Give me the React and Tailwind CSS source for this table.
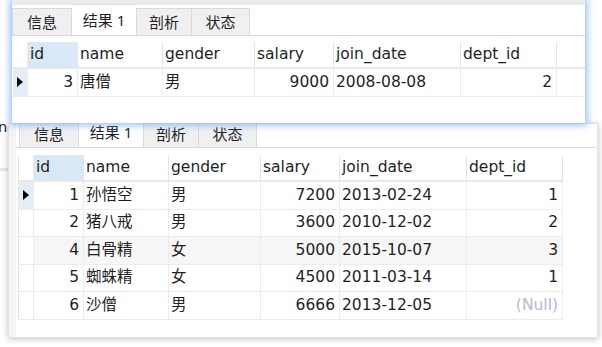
import React from "react";

const columns = [
  { key: "id", w: 50, right: true },
  { key: "name", w: 85 },
  { key: "gender", w: 92 },
  { key: "salary", w: 79, right: true },
  { key: "join_date", w: 127 },
  { key: "dept_id", w: 96, right: true },
];

const topRows = [{ id: 3, name: "唐僧", gender: "男", salary: 9000, join_date: "2008-08-08", dept_id: 2 }];

const bottomRows = [
  { id: 1, name: "孙悟空", gender: "男", salary: 7200, join_date: "2013-02-24", dept_id: 1 },
  { id: 2, name: "猪八戒", gender: "男", salary: 3600, join_date: "2010-12-02", dept_id: 2 },
  { id: 4, name: "白骨精", gender: "女", salary: 5000, join_date: "2015-10-07", dept_id: 3 },
  { id: 5, name: "蜘蛛精", gender: "女", salary: 4500, join_date: "2011-03-14", dept_id: 1 },
  { id: 6, name: "沙僧", gender: "男", salary: 6666, join_date: "2013-12-05", dept_id: null },
];

const font = { fontFamily: '"Noto Sans", "Noto Sans CJK SC", sans-serif' };
const cellFont = { fontFamily: '"DejaVu Sans", "Noto Sans CJK SC", sans-serif' };

const Tabs = () => (
  <div className="flex items-end h-full">
    <div className="h-[27px] w-[60px] flex items-center justify-center bg-[#f0f0f0] border border-b-0 border-[#dadada] text-[15px] text-[#1f1f1f]">
      信息
    </div>
    <div className="h-[31px] w-[64px] flex items-center justify-center bg-white border-t border-[#dadada] text-[15px] text-[#1f1f1f]">
      结果 1
    </div>
    <div className="h-[27px] w-[56px] flex items-center justify-center bg-[#f0f0f0] border border-b-0 border-[#dadada] text-[15px] text-[#1f1f1f]">
      剖析
    </div>
    <div className="h-[27px] w-[58px] flex items-center justify-center bg-[#f0f0f0] border border-b-0 border-l-0 border-[#dadada] text-[15px] text-[#1f1f1f]">
      状态
    </div>
  </div>
);

const Grid = ({ rows }) => (
  <div className="flex flex-col" style={cellFont}>
    <div className="flex h-[27px] border-b-2 border-[#e8e8e8]">
      <div className="w-[15px] border-r border-[#ececec]" />
      {columns.map((c, i) => (
        <div
          key={c.key}
          style={{ width: c.w }}
          className={`flex items-center pl-[2px] border-r border-[#e4e4e4] text-[15.5px] text-[#1f1f1f] ${i === 0 ? "bg-[#d9e8f6]" : ""}`}
        >
          {c.key}
        </div>
      ))}
    </div>
    {rows.map((r, ri) => (
      <div key={r.id} className={`flex h-[27.6px] border-b border-[#ececec] ${ri === 2 ? "bg-[#f6f6f6]" : ""}`}>
        <div className={`w-[15px] flex items-center justify-center border-r border-[#ececec] ${ri === 0 ? "bg-[#e4eef9]" : "bg-white"}`}>
          {ri === 0 && (
            <svg width="6" height="10" viewBox="0 0 6 10">
              <path d="M0 0 L6 5 L0 10 Z" fill="#000" />
            </svg>
          )}
        </div>
        {columns.map((c) => {
          const v = r[c.key];
          const isNull = v === null;
          return (
            <div
              key={c.key}
              style={{ width: c.w }}
              className={`flex items-center border-r border-[#ececec] text-[15.5px] ${
                c.right ? "justify-end pr-[4px]" : "pl-[2px]"
              } ${isNull ? "text-[#b4bccb]" : "text-[#1f1f1f]"}`}
            >
              {isNull ? "(Null)" : v}
            </div>
          );
        })}
      </div>
    ))}
  </div>
);

export default function App() {
  return (
    <div className="relative w-[602px] h-[347px] bg-white overflow-hidden" style={font}>
      {/* background window fragment */}
      <div className="absolute left-0 top-[116px] w-[8px] h-[60px] overflow-hidden">
        <div className="text-[15px] text-[#1f1f1f] leading-[16px] mt-[2px] -ml-[2px]">nc</div>
        <div className="mt-[34px] h-[3px] bg-[#e6e6e6]" />
      </div>

      {/* bottom window */}
      <div className="absolute left-[8px] top-[123px] w-[590px] h-[215px] bg-white border border-[#e2e2e2] shadow-[0_1px_6px_rgba(0,0,0,0.25)] flex">
        <div className="w-[7px] bg-[#f4f4f4]" />
        <div className="flex flex-col flex-1">
          <div className="h-[24px] pl-[3px] border-b border-[#dadada] flex items-end">
            <Tabs />
          </div>
          <div className="pt-[7px] pl-[2px] flex">
            <div className="border-l border-[#e4e4e4]">
              <Grid rows={bottomRows} />
            </div>
          </div>
        </div>
      </div>

      {/* top window */}
      <div className="absolute left-[12px] top-0 w-[573px] h-[123px] bg-white shadow-[0_0_7px_2px_rgba(110,165,245,0.75)] flex flex-col">
        <div className="h-[5px] bg-[#ececec]" />
        <div className="h-[31px] border-b border-[#dadada] flex items-end">
          <Tabs />
        </div>
        <div className="pt-[6px] pl-[1px]">
          <Grid rows={topRows} />
        </div>
      </div>
    </div>
  );
}
